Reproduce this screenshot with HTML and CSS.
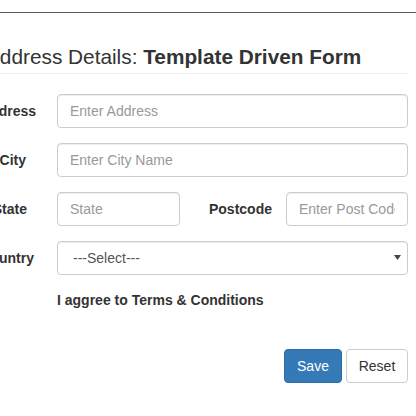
FILE: index.html
```html
<!DOCTYPE html>
<html>
<head>
<meta charset="utf-8">
<link rel="stylesheet" href="styles.css">
</head>
<body>
<div class="topbar"></div>
<div class="page">
  <h3 class="page-header">Address Details: <b>Template Driven Form</b></h3>
  <form class="form">
    <div class="row">
      <label class="lbl pr-address">Address</label>
      <input class="control" type="text" placeholder="Enter Address">
    </div>
    <div class="row">
      <label class="lbl pr-city">City</label>
      <input class="control" type="text" placeholder="Enter City Name">
    </div>
    <div class="row">
      <label class="lbl pr-state">State</label>
      <input class="control state" type="text" placeholder="State">
      <label class="lbl-post">Postcode</label>
      <input class="control" type="text" placeholder="Enter Post Code">
    </div>
    <div class="row">
      <label class="lbl pr-country">Country</label>
      <div class="select-wrap">
        <select class="control select">
          <option>---Select---</option>
        </select>
        <svg class="arrow" width="7" height="5" viewBox="0 0 7 5"><path d="M0 0H7L3.5 5Z" fill="#444"/></svg>
      </div>
    </div>
    <div class="row terms-row">
      <span class="spacer"></span>
      <label class="terms">I aggree to Terms &amp; Conditions</label>
    </div>
    <div class="actions">
      <button type="button" class="btn btn-primary btn-save">Save</button>
      <button type="button" class="btn btn-default btn-reset">Reset</button>
    </div>
  </form>
</div>
</body>
</html>
```
FILE: styles.css
```css
html, body {
  margin: 0;
  padding: 0;
  background: #fff;
}
body {
  font-family: "Liberation Sans", Arial, sans-serif;
  font-size: 14px;
  color: #333;
  overflow: hidden;
}
.topbar {
  margin-top: 12px;
  height: 1px;
  background: #5c5c5c;
}
.page {
  padding-right: 8px;
}
.page-header {
  margin: 33px 0 0 -14px;
  padding-bottom: 5px;
  font-size: 20.8px;
  line-height: 22px;
  font-weight: normal;
  color: #333;
  border-bottom: 1px solid #eee;
  white-space: nowrap;
}
.page-header b {
  font-weight: bold;
}
.form {
  margin-top: 20px;
}
.row {
  display: flex;
  align-items: center;
  margin-bottom: 15px;
}
.lbl {
  flex: 0 0 57px;
  min-width: 0;
  width: 57px;
  box-sizing: border-box;
  text-align: right;
  font-weight: bold;
  white-space: nowrap;
  direction: rtl;
}
.pr-address { padding-right: 21px; }
.pr-city { padding-right: 31px; }
.pr-state { padding-right: 30px; }
.pr-country { padding-right: 23px; }
.control {
  flex: 1 1 auto;
  min-width: 0;
  box-sizing: border-box;
  height: 34px;
  padding: 6px 12px;
  font-family: "Liberation Sans", Arial, sans-serif;
  font-size: 14px;
  color: #555;
  background: #fff;
  border: 1px solid #ccc;
  border-radius: 4px;
  box-shadow: inset 0 1px 1px rgba(0,0,0,.075);
  outline: none;
}
.control::placeholder {
  color: #999;
}
.state {
  flex: 0 0 123px;
}
.lbl-post {
  flex: 0 0 92px;
  min-width: 0;
  box-sizing: border-box;
  text-align: right;
  font-weight: bold;
  white-space: nowrap;
  margin-right: 14px;
}
.select-wrap {
  flex: 1 1 auto;
  min-width: 0;
  position: relative;
  display: flex;
}
.select {
  appearance: none;
  -webkit-appearance: none;
  width: 100%;
  padding-left: 15px;
  color: #555;
}
.arrow {
  position: absolute;
  right: 7px;
  top: 14px;
}
.terms-row {
  height: 20px;
}
.spacer {
  flex: 0 0 57px;
}
.terms {
  font-weight: bold;
  line-height: 20px;
}
.actions {
  display: flex;
  justify-content: flex-end;
  gap: 4px;
  margin-top: 39px;
}
.btn {
  box-sizing: border-box;
  height: 34px;
  padding: 6px 0;
  font-family: "Liberation Sans", Arial, sans-serif;
  font-size: 14px;
  line-height: 20px;
  text-align: center;
  border: 1px solid #ccc;
  border-radius: 4px;
  cursor: pointer;
}
.btn-save { width: 58px; }
.btn-reset { width: 62px; }
.btn-primary {
  color: #fff;
  background: #337ab7;
  border-color: #2e6da4;
}
.btn-default {
  color: #333;
  background: #fff;
  border-color: #ccc;
}
```
